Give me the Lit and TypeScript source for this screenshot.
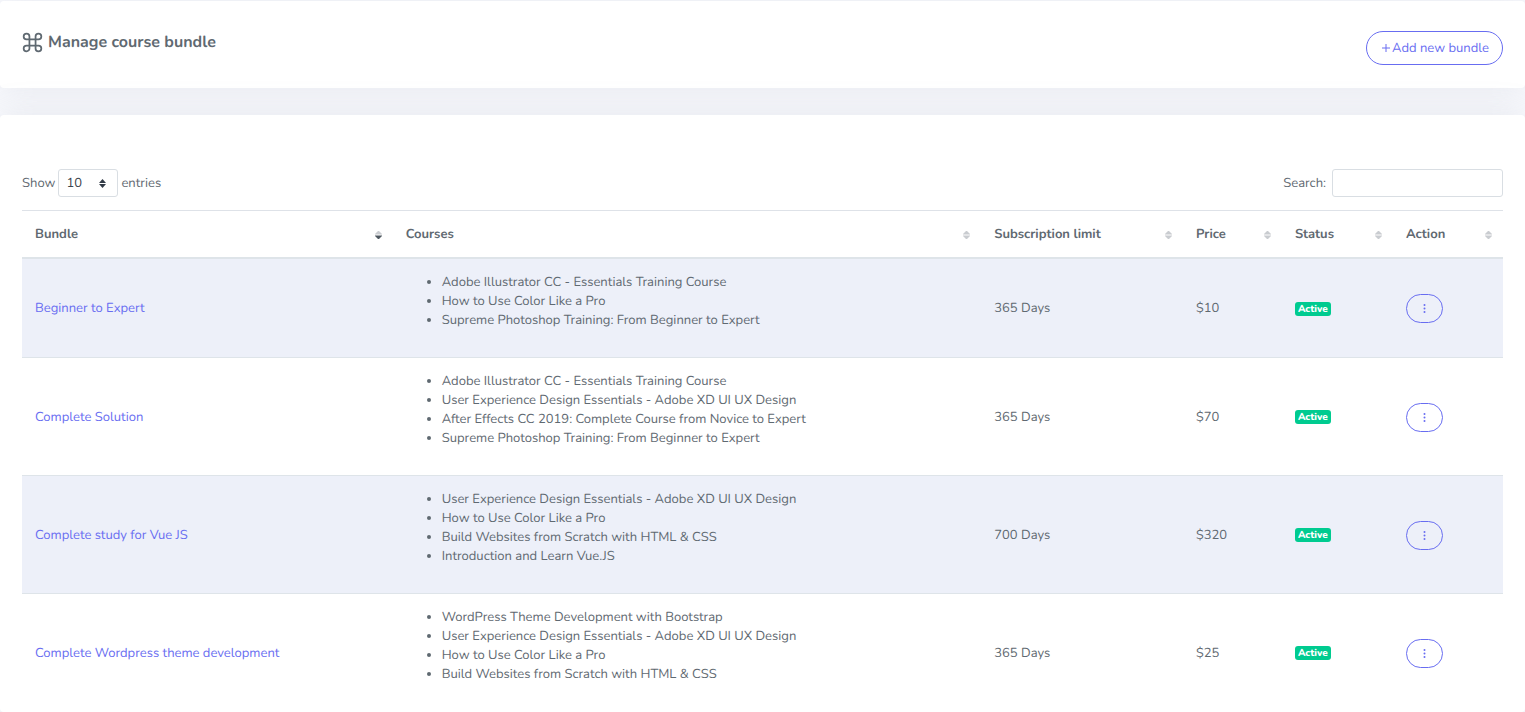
import { LitElement, html, css } from "lit";
import { customElement, state } from "lit/decorators.js";
import { classMap } from "lit/directives/class-map.js";

interface Bundle {
  name: string;
  courses: string[];
  limit: string;
  price: string;
}

const COLUMNS = [
  { key: "bundle", label: "Bundle" },
  { key: "courses", label: "Courses" },
  { key: "limit", label: "Subscription limit" },
  { key: "price", label: "Price" },
  { key: "status", label: "Status" },
  { key: "action", label: "Action" },
];

const BUNDLES: Bundle[] = [
  {
    name: "Beginner to Expert",
    courses: [
      "Adobe Illustrator CC - Essentials Training Course",
      "How to Use Color Like a Pro",
      "Supreme Photoshop Training: From Beginner to Expert",
    ],
    limit: "365 Days",
    price: "$10",
  },
  {
    name: "Complete Solution",
    courses: [
      "Adobe Illustrator CC - Essentials Training Course",
      "User Experience Design Essentials - Adobe XD UI UX Design",
      "After Effects CC 2019: Complete Course from Novice to Expert",
      "Supreme Photoshop Training: From Beginner to Expert",
    ],
    limit: "365 Days",
    price: "$70",
  },
  {
    name: "Complete study for Vue JS",
    courses: [
      "User Experience Design Essentials - Adobe XD UI UX Design",
      "How to Use Color Like a Pro",
      "Build Websites from Scratch with HTML & CSS",
      "Introduction and Learn Vue.JS",
    ],
    limit: "700 Days",
    price: "$320",
  },
  {
    name: "Complete Wordpress theme development",
    courses: [
      "WordPress Theme Development with Bootstrap",
      "User Experience Design Essentials - Adobe XD UI UX Design",
      "How to Use Color Like a Pro",
      "Build Websites from Scratch with HTML & CSS",
    ],
    limit: "365 Days",
    price: "$25",
  },
];

@customElement("app-root")
export class AppRoot extends LitElement {
  @state() private sortKey = "bundle";

  static styles = css`
    :host {
      display: flex;
      flex-direction: column;
      gap: 27px;
      box-sizing: border-box;
      min-height: 100vh;
      padding-top: 1px;
      background: #f8f9fd;
      color: #5f6971;
      font: 13px/19px Nunito, Lato, sans-serif;
      text-rendering: geometricPrecision;
    }
    * {
      box-sizing: border-box;
    }
    .card {
      background: #fff;
      border-radius: 4px;
      box-shadow: 0 0 35px rgba(154, 161, 171, 0.18);
    }
    .head {
      display: flex;
      justify-content: space-between;
      align-items: flex-start;
      padding: 30px 22px 23px;
    }
    .title {
      display: flex;
      align-items: center;
      gap: 5px;
      margin: 0;
      font-size: 16px;
      line-height: 23px;
      font-weight: 700;
    }
    .title svg {
      width: 21px;
      height: 21px;
    }
    .pill {
      display: inline-flex;
      align-items: center;
      justify-content: center;
      border: 1px solid #686df1;
      border-radius: 32px;
      background: transparent;
      color: #686df1;
      font: inherit;
      text-rendering: inherit;
      cursor: pointer;
    }
    .add {
      gap: 2px;
      height: 34px;
      padding: 0 13px 0 15px;
    }
    .add svg {
      width: 8px;
      height: 8px;
    }
    .more {
      display: flex;
      width: 37px;
      height: 29px;
      padding: 0;
    }
    .more svg {
      width: 3px;
      height: 9px;
    }
    .body {
      flex: 1;
      padding: 54px 22px 0;
    }
    .tools {
      display: flex;
      justify-content: space-between;
      align-items: center;
      margin-bottom: 13px;
    }
    .tools label {
      display: flex;
      align-items: center;
      gap: 3px;
    }
    .tools .search {
      gap: 6px;
    }
    .length {
      display: inline-grid;
      align-items: center;
    }
    .length select,
    .search input {
      height: 28px;
      border: 1px solid #d9dee3;
      border-radius: 3px;
      background: #fff;
      color: #3b444c;
      font: inherit;
      text-rendering: inherit;
      outline: none;
    }
    .length select {
      grid-area: 1 / 1;
      width: 60px;
      padding: 0 7px;
      appearance: none;
    }
    .length svg {
      grid-area: 1 / 1;
      justify-self: end;
      width: 7px;
      height: 9px;
      margin-right: 12px;
      pointer-events: none;
    }
    .search input {
      width: 171px;
      padding: 0 8px;
    }
    table {
      width: 100%;
      table-layout: fixed;
      border-collapse: separate;
      border-spacing: 0;
    }
    .col-bundle { width: 25.03%; }
    .col-courses { width: 39.74%; }
    .col-limit { width: 13.62%; }
    .col-price { width: 6.68%; }
    .col-status { width: 7.5%; }
    .col-action { width: 7.43%; }
    th {
      padding: 0 11px 0 13px;
      border-top: 1px solid #dee2e8;
      border-bottom: 2px solid #dee4e9;
      text-align: left;
      font-weight: 700;
    }
    .sort {
      display: flex;
      align-items: center;
      justify-content: space-between;
      width: 100%;
      height: 46px;
      padding: 0;
      border: 0;
      background: none;
      color: inherit;
      font: inherit;
      text-rendering: inherit;
      cursor: pointer;
    }
    .sort svg {
      width: 7px;
      height: 8px;
      margin-top: 2px;
      fill: #c9ccd0;
    }
    .sorted .down {
      fill: #4f5860;
    }
    td {
      padding: 14px 13px 13px;
      border-top: 1px solid #dee4e9;
      vertical-align: middle;
    }
    tbody tr:first-child td {
      border-top: 0;
    }
    tbody tr:nth-child(odd) {
      background: #edf0f9;
    }
    ul {
      margin: 0 0 14px;
      padding-left: 36px;
    }
    a {
      color: #686df1;
      text-decoration: none;
    }
    .badge {
      display: block;
      width: fit-content;
      padding: 0 3px;
      border-radius: 3px;
      background: #00cb90;
      color: #fff;
      font-size: 10px;
      line-height: 14px;
      font-weight: 800;
    }
  `;

  render() {
    return html`
      <header class="card head">
        <h1 class="title">
          <svg viewBox="0 0 24 24" fill="none" stroke="currentColor" stroke-width="2" aria-hidden="true">
            <path d="M8.5 8.5h7v7h-7zM8.5 8.5V5.2A3.3 3.3 0 1 0 5.2 8.5zM15.5 8.5V5.2A3.3 3.3 0 1 1 18.8 8.5zM8.5 15.5v3.3A3.3 3.3 0 1 1 5.2 15.5zM15.5 15.5v3.3A3.3 3.3 0 1 0 18.8 15.5z" />
          </svg>
          Manage course bundle
        </h1>
        <button class="pill add" type="button">
          <svg viewBox="0 0 8 8" stroke="currentColor" fill="none" aria-hidden="true"><path d="M4 0v8M0 4h8" /></svg>
          Add new bundle
        </button>
      </header>
      <main class="card body">
        <div class="tools">
          <label>
            Show
            <span class="length">
              <select>
                <option>10</option>
                <option>25</option>
                <option>50</option>
                <option>100</option>
              </select>
              <svg viewBox="0 0 7 9" fill="#313a46" aria-hidden="true"><path d="M0 4L3.5 0L7 4zM0 5L3.5 9L7 5z" /></svg>
            </span>
            entries
          </label>
          <label class="search">Search: <input type="search" /></label>
        </div>
        <table>
          <thead>
            <tr>
              ${COLUMNS.map(
                (c) => html`<th class="col-${c.key}">
                  <button
                    type="button"
                    class=${classMap({ sort: true, sorted: this.sortKey === c.key })}
                    @click=${() => (this.sortKey = c.key)}
                  >
                    ${c.label}
                    <svg viewBox="0 0 7 8" aria-hidden="true">
                      <path d="M0 3.5V3L3 0h1L7 3v.5z" />
                      <path class="down" d="M0 4.5V5L3 8h1L7 5v-.5z" />
                    </svg>
                  </button>
                </th>`
              )}
            </tr>
          </thead>
          <tbody>
            ${BUNDLES.map(
              (b) => html`<tr>
                <td><a href="#">${b.name}</a></td>
                <td><ul>${b.courses.map((c) => html`<li>${c}</li>`)}</ul></td>
                <td>${b.limit}</td>
                <td>${b.price}</td>
                <td><span class="badge">Active</span></td>
                <td>
                  <button class="pill more" type="button" aria-label="Actions">
                    <svg viewBox="0 0 3 9" fill="currentColor" aria-hidden="true">
                      <circle cx="1.5" cy="1" r="1" /><circle cx="1.5" cy="4.5" r="1" /><circle cx="1.5" cy="8" r="1" />
                    </svg>
                  </button>
                </td>
              </tr>`
            )}
          </tbody>
        </table>
      </main>
    `;
  }
}
